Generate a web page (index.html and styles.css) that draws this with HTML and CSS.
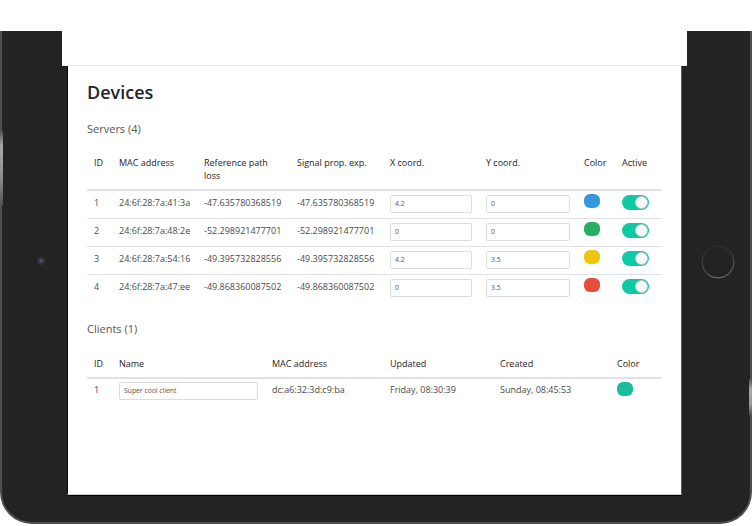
FILE: index.html
```html
<!DOCTYPE html>
<html lang="en">
<head>
<meta charset="utf-8">
<title>Devices</title>
<link rel="stylesheet" href="styles.css">
</head>
<body>
<div class="device">
  <div class="bezel bezel-left"><span class="camera"></span></div>
  <div class="app">
    <div class="app-header"></div>
    <main class="screen">
      <h2 class="title">Devices</h2>
      <h5 class="section">Servers (4)</h5>
      <table class="tbl">
        <colgroup>
          <col class="w25"><col class="w85"><col class="w93"><col class="w93"><col class="w96"><col class="w98"><col class="w38"><col class="w47">
        </colgroup>
        <thead>
          <tr><th>ID</th><th>MAC address</th><th>Reference path loss</th><th>Signal prop. exp.</th><th>X coord.</th><th>Y coord.</th><th>Color</th><th>Active</th></tr>
        </thead>
        <tbody>
          <tr>
            <td>1</td><td>24:6f:28:7a:41:3a</td><td>-47.635780368519</td><td>-47.635780368519</td>
            <td><input class="field" type="text" value="4.2"></td><td><input class="field" type="text" value="0"></td>
            <td><span class="swatch blue"></span></td><td><span class="toggle"><span class="knob"></span></span></td>
          </tr>
          <tr>
            <td>2</td><td>24:6f:28:7a:48:2e</td><td>-52.298921477701</td><td>-52.298921477701</td>
            <td><input class="field" type="text" value="0"></td><td><input class="field" type="text" value="0"></td>
            <td><span class="swatch green"></span></td><td><span class="toggle"><span class="knob"></span></span></td>
          </tr>
          <tr>
            <td>3</td><td>24:6f:28:7a:54:16</td><td>-49.395732828556</td><td>-49.395732828556</td>
            <td><input class="field" type="text" value="4.2"></td><td><input class="field" type="text" value="3.5"></td>
            <td><span class="swatch yellow"></span></td><td><span class="toggle"><span class="knob"></span></span></td>
          </tr>
          <tr>
            <td>4</td><td>24:6f:28:7a:47:ee</td><td>-49.868360087502</td><td>-49.868360087502</td>
            <td><input class="field" type="text" value="0"></td><td><input class="field" type="text" value="3.5"></td>
            <td><span class="swatch red"></span></td><td><span class="toggle"><span class="knob"></span></span></td>
          </tr>
        </tbody>
      </table>

      <h5 class="section section-gap">Clients (1)</h5>
      <table class="tbl">
        <colgroup>
          <col class="w25"><col class="w153"><col class="w118"><col class="w110"><col class="w117"><col class="w52">
        </colgroup>
        <thead>
          <tr><th>ID</th><th>Name</th><th>MAC address</th><th>Updated</th><th>Created</th><th>Color</th></tr>
        </thead>
        <tbody>
          <tr>
            <td>1</td><td><input class="field" type="text" value="Super cool client"></td><td>dc:a6:32:3d:c9:ba</td>
            <td>Friday, 08:30:39</td><td>Sunday, 08:45:53</td><td><span class="swatch teal"></span></td>
          </tr>
        </tbody>
      </table>
    </main>
  </div>
  <div class="bezel bezel-right">
    <svg class="home" viewBox="0 0 34 34" aria-hidden="true">
      <defs>
        <linearGradient id="ring" x1="0" y1="0" x2="0.25" y2="1">
          <stop offset="0" stop-color="#2a2a2a"/>
          <stop offset="0.5" stop-color="#444"/>
          <stop offset="1" stop-color="#7a7a7a"/>
        </linearGradient>
      </defs>
      <circle cx="17" cy="17" r="16" fill="none" stroke="url(#ring)" stroke-width="1"/>
    </svg>
  </div>
</div>
</body>
</html>
```

FILE: styles.css
```css
* { box-sizing: border-box; }

html, body {
  margin: 0;
  padding: 0;
  background: #fff;
}

body {
  width: 752px;
  height: 526px;
  overflow: hidden;
  font-family: "Open Sans", "Noto Sans", sans-serif;
}

/* device frame */
.device {
  position: relative;
  display: flex;
  align-items: flex-start;
  width: 752px;
  height: 493px;
  margin-top: 31px;
  background: #232323;
  border: 2px solid #4f4f4f;
  border-top: 0;
  border-radius: 0 0 32px 32px;
}

.device::before,
.device::after {
  content: "";
  position: absolute;
  width: 3px;
}

.device::before {
  left: -2px;
  top: 100px;
  height: 75px;
  background: linear-gradient(#4f4f4f, #a8a8a8 20%, #8a8a8a 65%, #4f4f4f);
}

.device::after {
  right: -2px;
  top: 348px;
  height: 36px;
  background: linear-gradient(#4f4f4f, #a8a8a8 30%, #9a9a9a 70%, #4f4f4f);
}

.bezel {
  flex: none;
  align-self: stretch;
}

.bezel-left {
  width: 60px;
  padding: 227px 0 0 36px;
}

.camera {
  display: block;
  width: 6px;
  height: 6px;
  border-radius: 50%;
  background: radial-gradient(circle, #55557a 0, #2d2d3c 75%);
  box-shadow: 0 0 0 1px #333;
}

.bezel-right {
  width: 63px;
  padding: 214px 0 0 14px;
}

.home {
  display: block;
  width: 34px;
  height: 34px;
}

/* app screen */
.app {
  flex: none;
  width: 625px;
  margin-top: -31px;
  display: flex;
  flex-direction: column;
}

.app-header {
  height: 66px;
  background: #fff;
  border-bottom: 1px solid #e9e9e9;
}

.screen {
  display: block;
  height: 429px;
  margin: 0 5px;
  padding: 16px 18px 0 19px;
  background: #fff;
  border-left: 1px solid #0d0d0d;
  border-right: 1px solid #5c5c5c;
  border-bottom: 1px solid #cfcfcf;
  box-shadow: 0 1px 0 #000;
}

.title {
  margin: 0;
  font-size: 18px;
  line-height: 21.6px;
  font-weight: 600;
  color: #212529;
}

.section {
  margin: 18px 0 0;
  font-size: 11px;
  line-height: 13.2px;
  font-weight: 400;
  color: #555;
}

.section-gap {
  margin-top: 20px;
}

/* tables */
.tbl {
  width: 575px;
  margin-top: 14px;
  table-layout: fixed;
  border-collapse: separate;
  border-spacing: 0;
  font-size: 9px;
  line-height: 13.5px;
}

.w25 { width: 25px; }
.w38 { width: 38px; }
.w47 { width: 47px; }
.w52 { width: 52px; }
.w85 { width: 85px; }
.w93 { width: 93px; }
.w96 { width: 96px; }
.w98 { width: 98px; }
.w110 { width: 110px; }
.w117 { width: 117px; }
.w118 { width: 118px; }
.w153 { width: 153px; }

.tbl th {
  padding: 7px 7px 6.5px;
  text-align: left;
  vertical-align: top;
  font-weight: 400;
  color: #1f2326;
  border-bottom: 2px solid #dee2e6;
}

.tbl td {
  height: 28px;
  padding: 4.5px 7px 0;
  vertical-align: top;
  color: #4a4a4a;
  border-top: 1px solid #dee2e6;
  white-space: nowrap;
}

.tbl tbody tr:first-child td {
  height: 27px;
  border-top: 0;
}

.field {
  display: block;
  width: 100%;
  height: 18px;
  margin: -1.2px 0 0;
  padding: 0 4px;
  font-family: "Open Sans", "Noto Sans", sans-serif;
  font-size: 6.8px;
  color: #555;
  background: #fff;
  border: 1px solid #dcdcdc;
  border-radius: 2px;
  outline: none;
}

.swatch {
  display: block;
  width: 16px;
  height: 14px;
  margin-top: -1.5px;
  border-radius: 6px;
}

.blue { background: #3498db; }
.green { background: #27ae60; }
.yellow { background: #f1c40f; }
.red { background: #e74c3c; }
.teal { background: #1abc9c; }

.toggle {
  display: flex;
  justify-content: flex-end;
  align-items: center;
  width: 27px;
  height: 15px;
  margin-top: -1.2px;
  padding: 1px;
  border-radius: 8px;
  background: #0ec9a3;
}

.knob {
  display: block;
  width: 13px;
  height: 13px;
  border-radius: 50%;
  background: #f8f8f8;
  border: 1px solid #c8c8c8;
}
```
